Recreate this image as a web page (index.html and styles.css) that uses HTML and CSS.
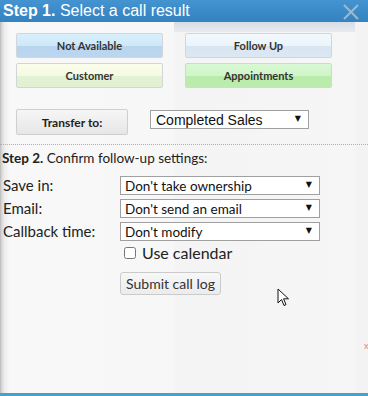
FILE: index.html
```html
<!DOCTYPE html>
<html lang="en">
<head>
  <meta charset="UTF-8">
  <meta name="viewport" content="width=device-width, initial-scale=1.0">
  <title>Call result</title>
  <link rel="stylesheet" href="styles.css">
</head>
<body>
  <div class="dialog">
    <div class="title-bar">
      <span class="title"><b>Step 1.</b> Select a call result</span>
      <svg class="close" width="18" height="16" viewBox="0 0 18 16">
        <path d="M2 1 L16 15 M16 1 L2 15" />
      </svg>
    </div>

    <div class="content">
      <div class="results">
        <button class="result not-available">Not Available</button>
        <button class="result follow-up">Follow Up</button>
        <button class="result customer">Customer</button>
        <button class="result appointments">Appointments</button>
      </div>

      <div class="transfer">
        <button class="transfer-btn">Transfer to:</button>
        <span class="select-wrap wide">
          <select class="plain-select">
            <option>Completed Sales</option>
          </select>
        </span>
      </div>

      <div class="step2"><b>Step 2.</b> Confirm follow-up settings:</div>

      <form class="settings">
        <label for="saveIn">Save in:</label>
        <span class="select-wrap">
          <select id="saveIn" class="plain-select">
            <option>Don't take ownership</option>
          </select>
        </span>

        <label for="email">Email:</label>
        <span class="select-wrap">
          <select id="email" class="plain-select">
            <option>Don't send an email</option>
          </select>
        </span>

        <label for="callback">Callback time:</label>
        <span class="select-wrap">
          <select id="callback" class="plain-select">
            <option>Don't modify</option>
          </select>
        </span>

        <span></span>
        <label class="calendar"><input type="checkbox"> Use calendar</label>

        <span></span>
        <div><button type="button" class="submit">Submit call log</button></div>
      </form>

      <!-- mouse pointer caught in the capture -->
      <svg class="pointer" width="13" height="20" viewBox="0 0 13 20">
        <path d="M1 1 L1 15 L4.5 11.5 L7 17.5 L9 16.6 L6.6 10.8 L11.5 10.8 Z" />
      </svg>
      <span class="stray">x</span>
    </div>
  </div>
</body>
</html>
```

FILE: styles.css
```css
body {
  margin: 0;
  background-color: #f6f6f6;
  font-family: "Lato", "Liberation Sans", sans-serif;
  color: #222;
}

.dialog {
  width: 368px;
  height: 396px;
  display: flex;
  flex-direction: column;
  overflow: hidden;
}

.title-bar {
  height: 22px;
  display: flex;
  align-items: center;
  justify-content: space-between;
  padding: 0 8px 0 3px;
  background: linear-gradient(#4394d0, #3482c0);
  color: #ffffff;
  font-family: "Liberation Sans", Arial, sans-serif;
  font-size: 16px;
}

.title b {
  font-weight: 700;
}

.close {
  margin-top: 1px;
}

.close path {
  stroke: #9fb8cc;
  stroke-width: 2;
  fill: none;
}

.content {
  flex: 1;
  position: relative;
  border-bottom: 3px solid #45a2cc;
  background:
    linear-gradient(#d5dde4, #e8ecf0) 174px 0 / 181px 10px no-repeat,
    linear-gradient(to right, #b9b9b9 0, #dcdcdc 2px, #efefef 5px, #f8f8f8 10px, #f7f7f7 174px, #f4f4f4 175px, #f6f6f6 355px, #f3f3f3 356px);
}

.results {
  display: grid;
  grid-template-columns: 147px 147px;
  column-gap: 22px;
  row-gap: 5px;
  padding: 11px 0 0 16px;
}

.result {
  height: 25px;
  border: 1px solid #d2d6da;
  border-radius: 2px;
  font-family: "Lato", "Liberation Sans", sans-serif;
  font-size: 11px;
  font-weight: 700;
  color: #333;
  cursor: pointer;
}

.not-available {
  background: linear-gradient(#d8f0fc 0, #cfe8f8 50%, #b9d4ee 51%, #bcd6ef 100%);
}

.follow-up {
  background: linear-gradient(#f2f9fd 0, #eaf4fa 50%, #d9e6f1 51%, #dbe8f3 100%);
}

.customer {
  background: linear-gradient(#fbfdeb 0, #f5fae2 50%, #e3f1d4 51%, #e2f1d2 100%);
}

.appointments {
  background: linear-gradient(#d9f8d4 0, #cff5c8 50%, #b9ecaa 51%, #bcecaf 100%);
}

.transfer {
  display: flex;
  align-items: flex-start;
  gap: 22px;
  padding: 21px 0 0 16px;
}

.transfer-btn {
  width: 112px;
  height: 26px;
  border: 1px solid #cfcfcf;
  border-radius: 2px;
  background: linear-gradient(#f6f6f6, #e6e6e6);
  font-family: "Lato", "Liberation Sans", sans-serif;
  font-size: 12px;
  font-weight: 700;
  color: #222;
}

.select-wrap {
  position: relative;
  display: block;
  width: 200px;
}

.select-wrap.wide {
  width: 159px;
  margin-top: 1px;
}

.select-wrap::after {
  content: "\25BC";
  position: absolute;
  right: 8px;
  top: 4px;
  font-family: "DejaVu Sans", sans-serif;
  font-size: 8px;
  color: #111;
  pointer-events: none;
}

.plain-select {
  appearance: none;
  -webkit-appearance: none;
  display: block;
  width: 100%;
  height: 19px;
  margin: 0;
  padding: 0 0 0 4px;
  border: 1px solid #a0a0a0;
  border-radius: 0;
  background-color: #ffffff;
  font-family: "Lato", "Liberation Sans", sans-serif;
  font-size: 13.5px;
  color: #111;
}

.wide .plain-select {
  font-family: "Liberation Sans", Arial, sans-serif;
  font-size: 14px;
  padding-left: 5px;
}

.step2 {
  margin-top: 9px;
  border-top: 1px dotted #b0b0b0;
  padding: 5px 0 0 2px;
  font-size: 13.5px;
  line-height: 16px;
  color: #222;
}

.step2 b {
  font-weight: 700;
}

.settings {
  display: grid;
  grid-template-columns: 117px 200px;
  row-gap: 4px;
  padding: 10px 0 0 3px;
  font-size: 15px;
}

.settings label {
  line-height: 19px;
}

.settings .calendar {
  display: flex;
  align-items: center;
  gap: 6px;
  height: 16px;
  padding-left: 4px;
  margin-top: 0;
  font-size: 16px;
  line-height: 16px;
}

.calendar input {
  width: 12px;
  height: 12px;
  margin: 0;
}

.submit {
  display: block;
  margin-top: 7px;
  width: 101px;
  height: 23px;
  border: 1px solid #cbcbcb;
  border-radius: 3px;
  background: linear-gradient(#f7f7f7, #ececec);
  font-family: "Lato", "Liberation Sans", sans-serif;
  font-size: 14px;
  color: #333;
  padding: 0;
}

.pointer {
  position: absolute;
  left: 277px;
  top: 266px;
}

.pointer path {
  fill: #ffffff;
  stroke: #111;
  stroke-width: 1;
}

.stray {
  position: absolute;
  left: 364px;
  top: 318px;
  font-size: 9px;
  color: #d88a7a;
}
```
